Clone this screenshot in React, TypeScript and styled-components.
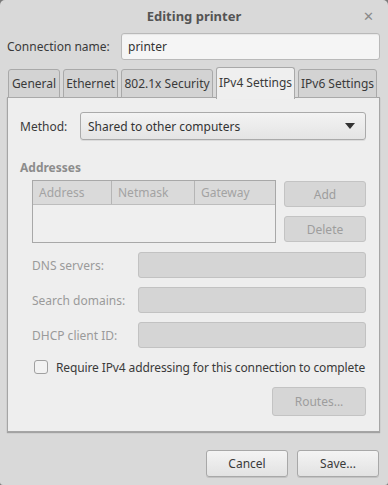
import React from "react";
import styled, { createGlobalStyle } from "styled-components";

const Global = createGlobalStyle`
  html, body { margin: 0; padding: 0; background: #7a7a7a; }
  body { font-family: "Noto Sans", "DejaVu Sans", sans-serif; font-size: 12px; color: #3c3c3c; white-space: nowrap; }
  * { box-sizing: border-box; }
`;

const Window = styled.div`
  width: 388px;
  height: 485px;
  background: #d9d9d9;
  border-radius: 5px 5px 3px 3px;
  display: flex;
  flex-direction: column;
  overflow: hidden;
`;

const TitleBar = styled.div`
  height: 31px;
  display: flex;
  align-items: center;
  justify-content: center;
  position: relative;
  font-weight: bold;
  font-size: 13px;
  color: #545454;
  padding-top: 1px;
`;

const Close = styled.span`
  position: absolute;
  right: 14px;
  top: 7px;
  font-size: 13px;
  font-weight: normal;
  color: #8a8a8a;
`;

const Body = styled.div`
  display: flex;
  flex-direction: column;
  padding: 0 8px 0 7px;
`;

const NameRow = styled.div`
  display: flex;
  align-items: center;
  height: 28px;
  margin-top: 1px;
`;

const NameLabel = styled.span`
  width: 114px;
  color: #3a3a3a;
`;

const TextField = styled.div`
  flex: 1;
  height: 27px;
  background: #f5f5f5;
  border: 1px solid #b9b9b9;
  border-radius: 3px;
  display: flex;
  align-items: center;
  padding-left: 6px;
  color: #333;
  box-shadow: inset 0 1px 1px rgba(0,0,0,0.06);
`;

const Tabs = styled.div`
  display: flex;
  align-items: flex-end;
  margin-top: 6px;
  height: 32px;
  gap: 3px;
  padding-left: 1px;
`;

const Tab = styled.div<{ $active?: boolean; $w: number }>`
  width: ${p => p.$w}px;
  height: ${p => (p.$active ? 32 : 29)}px;
  background: ${p => (p.$active ? "#efefef" : "#d3d3d3")};
  border: 1px solid #a9a9a9;
  border-bottom: ${p => (p.$active ? "none" : "1px solid #a9a9a9")};
  border-radius: 3px 3px 0 0;
  display: flex;
  align-items: center;
  justify-content: center;
  color: #3a3a3a;
  position: relative;
  z-index: ${p => (p.$active ? 2 : 1)};
  margin-bottom: ${p => (p.$active ? -1 : 0)}px;
  padding-bottom: ${p => (p.$active ? 2 : 0)}px;
`;

const Panel = styled.div`
  height: 335px;
  background: #eeeeee;
  border: 1px solid #a5a5a5;
  box-shadow: 0 1px 1px rgba(0,0,0,0.25);
  margin-top: -1px;
  padding: 14px 13px 0 12px;
  display: flex;
  flex-direction: column;
`;

const MethodRow = styled.div`
  display: flex;
  align-items: center;
  height: 28px;
`;

const MethodLabel = styled.span`
  width: 60px;
  color: #3a3a3a;
`;

const Combo = styled.div`
  flex: 1;
  height: 28px;
  background: linear-gradient(#f3f3f3, #e4e4e4);
  border: 1px solid #aaaaaa;
  border-radius: 3px;
  display: flex;
  align-items: center;
  justify-content: space-between;
  padding: 0 10px 0 7px;
  color: #333;
  box-shadow: 0 1px 0 rgba(0,0,0,0.08);
`;

const Section = styled.div`
  margin-top: 19px;
  font-weight: bold;
  color: #8c8c8c;
  height: 18px;
  line-height: 18px;
`;

const AddrArea = styled.div`
  display: flex;
  gap: 8px;
  margin-top: 3px;
  padding-left: 12px;
`;

const Table = styled.div`
  width: 245px;
  height: 63px;
  border: 1px solid #a8a8a8;
  background: #efefef;
  display: flex;
  flex-direction: column;
`;

const HeaderRow = styled.div`
  display: grid;
  grid-template-columns: 79px 83px 1fr;
  height: 24px;
  background: #dadada;
  border-bottom: 1px solid #bdbdbd;
`;

const HeaderCell = styled.div<{ $last?: boolean }>`
  display: flex;
  align-items: center;
  padding-left: 6px;
  color: #a3a3a3;
  border-right: ${p => (p.$last ? "none" : "1px solid #b5b5b5")};
`;

const SideButtons = styled.div`
  display: flex;
  flex-direction: column;
  gap: 9px;
  padding-top: 1px;
`;

const DisabledButton = styled.div<{ $w: number; $h: number }>`
  width: ${p => p.$w}px;
  height: ${p => p.$h}px;
  background: #d6d6d6;
  border: 1px solid #c3c3c3;
  border-radius: 3px;
  display: flex;
  align-items: center;
  justify-content: center;
  color: #9d9d9d;
`;

const FieldRow = styled.div`
  display: flex;
  align-items: center;
  height: 26px;
  margin-top: 9px;
  padding-left: 12px;
`;

const FieldLabel = styled.span`
  width: 106px;
  color: #9a9a9a;
`;

const DisabledField = styled.div`
  flex: 1;
  height: 26px;
  background: #d5d5d5;
  border: 1px solid #c2c2c2;
  border-radius: 3px;
`;

const CheckRow = styled.div`
  display: flex;
  align-items: center;
  margin-top: 10px;
  padding-left: 14px;
  height: 18px;
  gap: 8px;
  color: #3a3a3a;
`;

const CheckText = styled.span`
  letter-spacing: -0.12px;
`;

const Box = styled.div`
  width: 14px;
  height: 14px;
  flex-shrink: 0;
  border: 1px solid #a0a0a0;
  border-radius: 3px;
  background: #f2f2f2;
`;

const RoutesRow = styled.div`
  display: flex;
  justify-content: flex-end;
  margin-top: 11px;
`;

const Footer = styled.div`
  display: flex;
  justify-content: flex-end;
  gap: 9px;
  padding: 18px 1px 0 0;
`;

const Button = styled.div`
  width: 82px;
  height: 27px;
  background: linear-gradient(#f4f4f4, #e2e2e2);
  border: 1px solid #a8a8a8;
  border-radius: 3px;
  display: flex;
  align-items: center;
  justify-content: center;
  color: #3a3a3a;
  box-shadow: 0 1px 0 rgba(0,0,0,0.1);
`;

export default function App() {
  return (
    <>
      <Global />
      <Window>
        <TitleBar>
          Editing printer
          <Close>✕</Close>
        </TitleBar>
        <Body>
          <NameRow>
            <NameLabel>Connection name:</NameLabel>
            <TextField>printer</TextField>
          </NameRow>
          <Tabs>
            <Tab $w={52}>General</Tab>
            <Tab $w={55}>Ethernet</Tab>
            <Tab $w={92}>802.1x Security</Tab>
            <Tab $w={79} $active>IPv4 Settings</Tab>
            <Tab $w={79}>IPv6 Settings</Tab>
          </Tabs>
          <Panel>
            <MethodRow>
              <MethodLabel>Method:</MethodLabel>
              <Combo>
                <span>Shared to other computers</span>
                <svg width="10" height="6" viewBox="0 0 10 6">
                  <path d="M0 0 L10 0 L5 6 Z" fill="#333" />
                </svg>
              </Combo>
            </MethodRow>
            <Section>Addresses</Section>
            <AddrArea>
              <Table>
                <HeaderRow>
                  <HeaderCell>Address</HeaderCell>
                  <HeaderCell>Netmask</HeaderCell>
                  <HeaderCell $last>Gateway</HeaderCell>
                </HeaderRow>
              </Table>
              <SideButtons>
                <DisabledButton $w={82} $h={26}>Add</DisabledButton>
                <DisabledButton $w={82} $h={26}>Delete</DisabledButton>
              </SideButtons>
            </AddrArea>
            <FieldRow>
              <FieldLabel>DNS servers:</FieldLabel>
              <DisabledField />
            </FieldRow>
            <FieldRow>
              <FieldLabel>Search domains:</FieldLabel>
              <DisabledField />
            </FieldRow>
            <FieldRow>
              <FieldLabel>DHCP client ID:</FieldLabel>
              <DisabledField />
            </FieldRow>
            <CheckRow>
              <Box />
              <CheckText>Require IPv4 addressing for this connection to complete</CheckText>
            </CheckRow>
            <RoutesRow>
              <DisabledButton $w={94} $h={29}>Routes...</DisabledButton>
            </RoutesRow>
          </Panel>
          <Footer>
            <Button>Cancel</Button>
            <Button>Save...</Button>
          </Footer>
        </Body>
      </Window>
    </>
  );
}
